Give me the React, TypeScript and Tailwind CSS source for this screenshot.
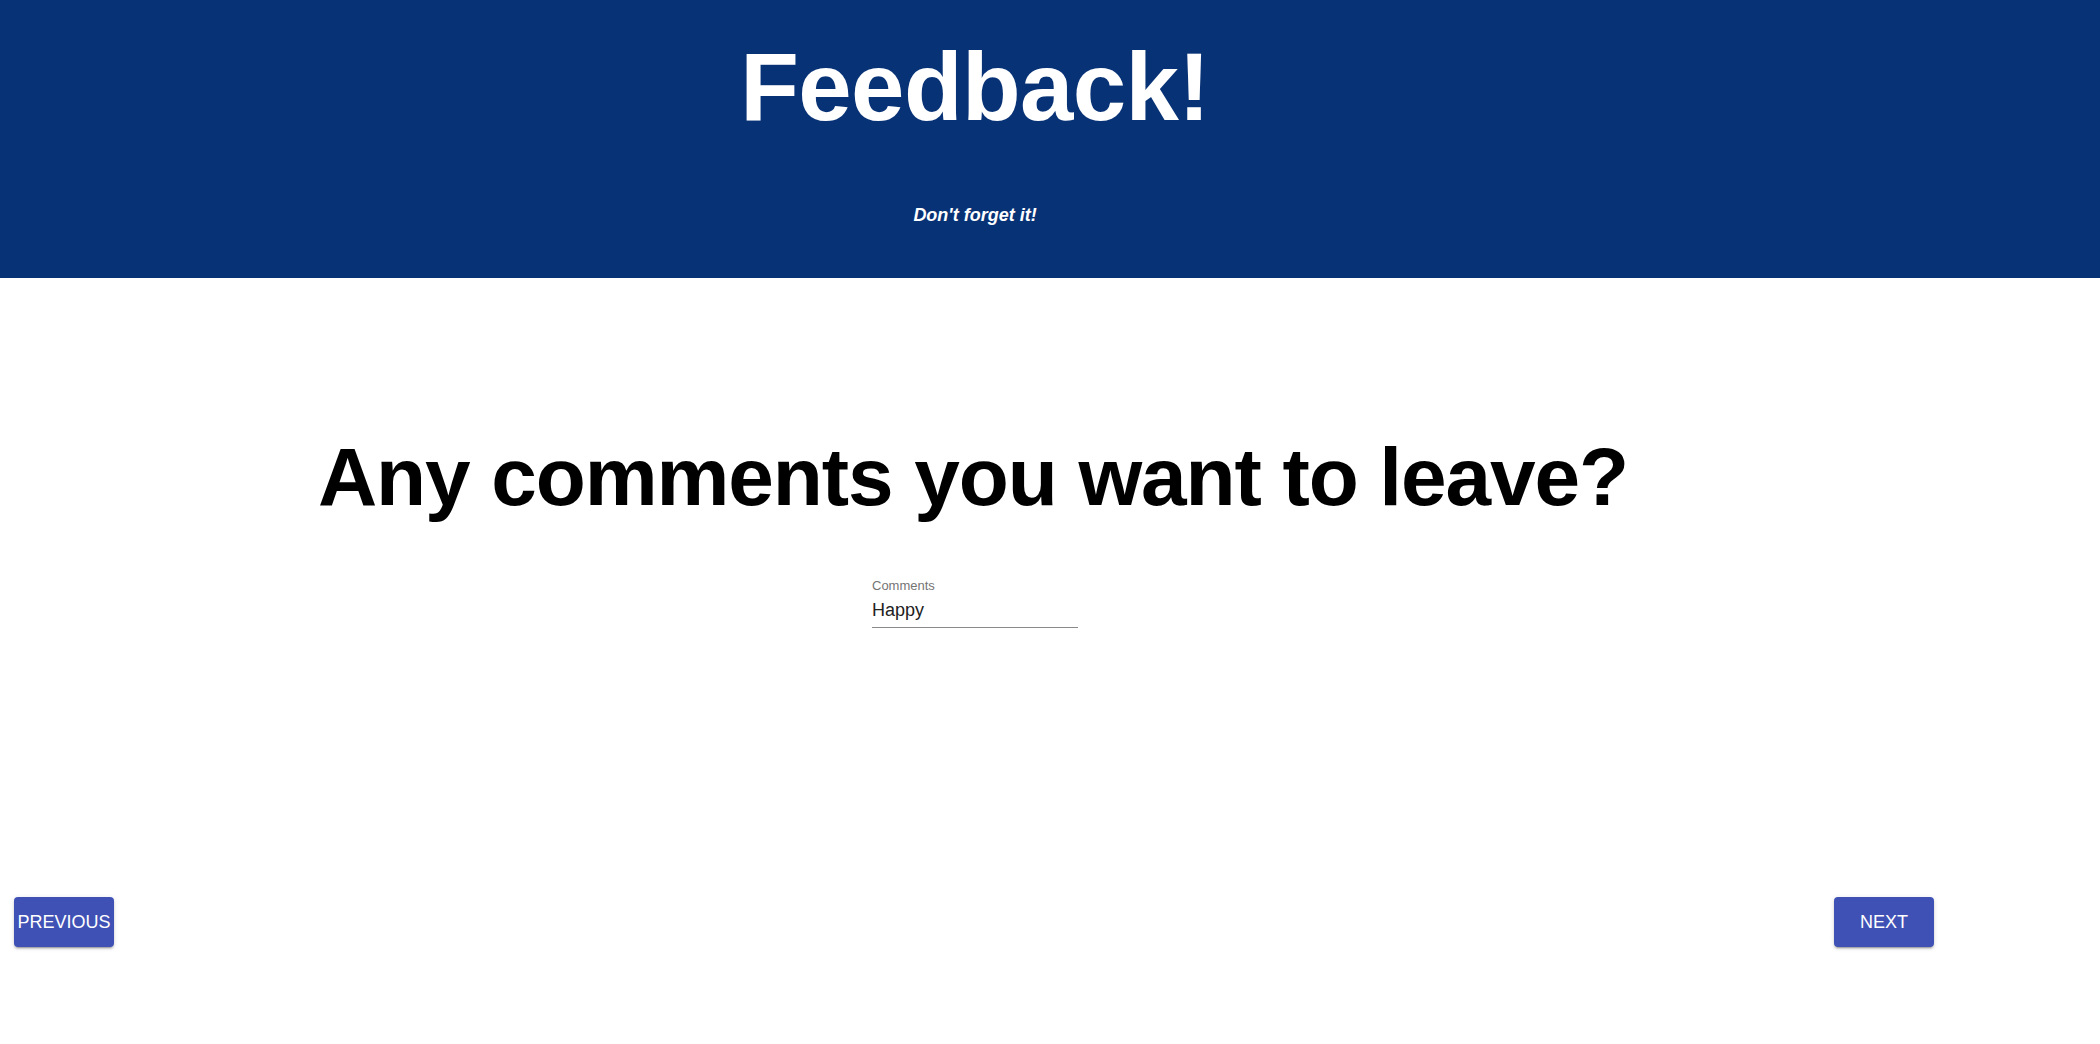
import React from "react";

const font = "[font-family:'Liberation_Sans',Arial,sans-serif]";

const buttonClass =
  "flex h-[50px] w-[100px] items-center justify-center rounded-[4px] bg-[#3f51b5] text-[18px] leading-none text-white shadow-[0_3px_1px_-2px_rgba(0,0,0,0.2),0_2px_2px_0_rgba(0,0,0,0.14),0_1px_5px_0_rgba(0,0,0,0.12)]";

export default function App() {
  return (
    <div className={`min-h-screen w-full bg-white ${font}`}>
      {/* header band */}
      <header className="h-[278px] w-full bg-[#083276]">
        <div className="flex w-[1950px] flex-col items-center">
          <h1 className="mt-[39px] text-[96px] font-bold leading-none tracking-[-0.6px] text-white">
            Feedback!
          </h1>
          <p className="mt-[71px] text-[18px] font-bold italic leading-none text-white">
            Don't forget it!
          </p>
        </div>
      </header>

      {/* question */}
      <main className="flex w-[1950px] flex-col items-center">
        <h2 className="mt-[158px] pr-[4px] text-[82px] font-bold leading-none tracking-[-1.1px] text-black">
          Any comments you want to leave?
        </h2>

        <div className="mt-[61px] flex w-[206px] flex-col">
          <label className="text-[13px] leading-none text-[#757575]">Comments</label>
          <div className="mt-[7px] border-b border-[#8a8a8a] pb-[4px]">
            <input
              defaultValue="Happy"
              className="w-full bg-transparent p-0 text-[18px] leading-none text-[#212121] outline-none"
            />
          </div>
        </div>

        <div className="mt-[269px] flex w-full items-center justify-between pl-[14px] pr-[16px]">
          <button type="button" className={buttonClass}>
            PREVIOUS
          </button>
          <button type="button" className={buttonClass}>
            NEXT
          </button>
        </div>
      </main>
    </div>
  );
}
